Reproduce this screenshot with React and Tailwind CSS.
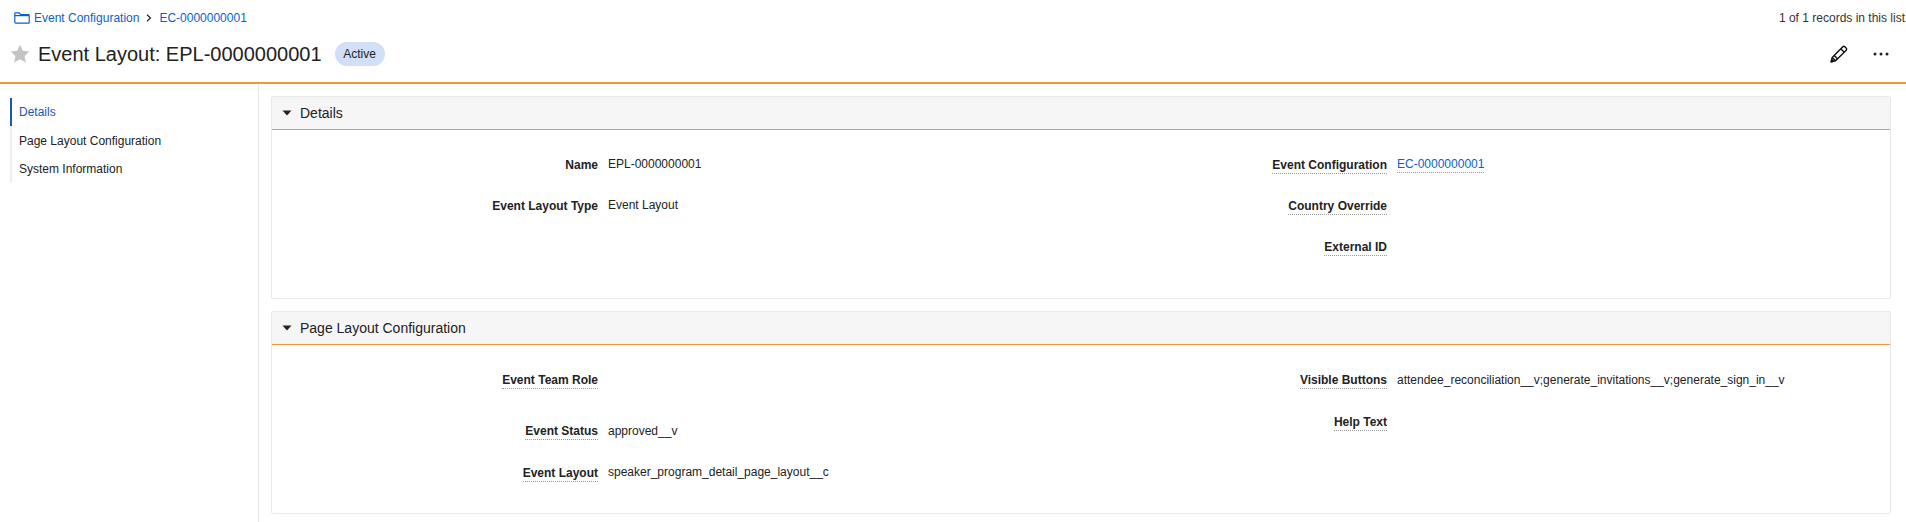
import React from "react";

const ORANGE = "border-[#f29636]";

function Field({ label, value, link, w, h = "h-[41px]", plain, nudge }) {
  return (
    <div className={`flex items-start ${h}`}>
      <div className={`${w} shrink-0 flex justify-end pr-[10px]`}>
        <span className={`font-bold leading-[15px] text-[#222] border-b ${plain ? "border-transparent" : "border-dotted border-[#999]"} ${nudge ? "mt-[1px]" : ""}`}>{label}</span>
      </div>
      {value ? (
        <span className={`leading-[14px] ${link ? "text-[#0a5fc9] border-b border-dotted border-[#999] pb-[1px]" : "text-[#222]"}`}>{value}</span>
      ) : null}
    </div>
  );
}

function Section({ title, children, bodyH }) {
  return (
    <section className="border border-[#e9e9e9] rounded-[2px] bg-white">
      <div className={`h-[33px] bg-[#f6f6f6] border-b ${ORANGE} flex items-center pl-[9px]`}>
        <svg width="10" height="6" viewBox="0 0 10 6" className="mr-[7px] ml-[1px]">
          <path d="M0.5 0.5h9L5 5.5z" fill="#222" />
        </svg>
        <h2 className="text-[14px] text-[#222] ml-[1px]">{title}</h2>
      </div>
      <div className={`grid grid-cols-2 ${bodyH}`}>{children}</div>
    </section>
  );
}

const L = "w-[336px]";
const R = "w-[316px]";

export default function App() {
  return (
    <div className="w-[1906px] h-[522px] overflow-hidden bg-white text-[12px] text-[#222] font-['Liberation_Sans',Arial,sans-serif]">
      <header className={`h-[84px] border-b-2 ${ORANGE} relative`}>
        <div className="h-[35px] pl-[14px] pr-[1px] flex items-center justify-between">
          <nav className="flex items-center text-[#0a5fc9]">
            <svg width="16" height="12" viewBox="0 0 16 12" fill="none" stroke="#0a5fc9" strokeWidth="1.2" className="mr-[4px]">
              <path d="M0.8 10V1.6c0-.5.3-.8.8-.8h3.6l1.4 1.7h7.8c.5 0 .8.3.8.8V10.400c0 .5-.3.8-.8.8H1.600c-.5 0-.8-.5-.8-1.200z" />
              <path d="M1 3.600h14" />
            </svg>
            <span>Event Configuration</span>
            <svg width="6" height="8" viewBox="0 0 6 8" fill="none" stroke="#222" strokeWidth="1.2" className="mx-[7px]">
              <path d="M1 .7 4.5 4 1 7.3" />
            </svg>
            <span>EC-0000000001</span>
          </nav>
          <span className="text-[#333]">1 of 1 records in this list</span>
        </div>
        <div className="flex items-center h-[37px] pl-[10px]">
          <svg width="20" height="19" viewBox="0 0 24 23" className="mr-[8px]">
            <path d="M12 .8l3.4 7.4 8 .9-5.9 5.4 1.6 8L12 18.5l-7.100 4 1.600-8L.6 9.100l8-.9z" fill="#c4c4c4" />
          </svg>
          <h1 className="text-[20px] text-[#222] leading-[24px]">Event Layout: EPL-0000000001</h1>
          <span className="ml-[13px] h-[24px] w-[50px] rounded-full bg-[#d2e0f7] flex items-center justify-center">Active</span>
          <div className="ml-auto flex items-center pr-[17px]">
            <svg width="18" height="18" viewBox="0 0 18 18" fill="none" stroke="#111" strokeWidth="1.4" strokeLinejoin="round" className="mr-[25px]">
              <path d="M1.200 16.800l1-4.400L12.600 2c.8-.8 1.700-.8 2.400-.1l1.100 1.100c.7.7.7 1.600-.1 2.400L5.600 15.800z" />
              <path d="M10.800 3.800l3.400 3.400M4.300 10.600l3.100 3.100M2.200 12.400l3.400 3.400" />
              <path d="M1.200 16.800l2.300-.5-1.800-1.800z" fill="#111" />
            </svg>
            <svg width="16" height="4" viewBox="0 0 16 4" fill="#222">
              <circle cx="2" cy="2" r="1.500" />
              <circle cx="8" cy="2" r="1.500" />
              <circle cx="14" cy="2" r="1.500" />
            </svg>
          </div>
        </div>
      </header>

      <div className="flex h-[438px]">
        <aside className="w-[259px] shrink-0 border-r border-[#e9e9e9] pt-[14px] pl-[10px]">
          <ul className="border-l-2 border-[#eeeeee]">
            <li className="h-[28px] -ml-[2px] border-l-2 border-[#1556b8] pl-[7px] flex items-center text-[#1556b8]">Details</li>
            <li className="h-[29px] pl-[7px] flex items-center">Page Layout Configuration</li>
            <li className="h-[28px] pl-[7px] flex items-center">System Information</li>
          </ul>
        </aside>
        <main className="w-[1632px] shrink-0 pl-[12px] pt-[12px] flex flex-col gap-[12px]">
          <Section title="Details" bodyH="h-[168px] pt-[27px]">
            <div>
              <Field w={L} label="Name" value="EPL-0000000001" plain nudge />
              <Field w={L} label="Event Layout Type" value="Event Layout" plain nudge />
            </div>
            <div>
              <Field w={R} label="Event Configuration" value="EC-0000000001" link nudge />
              <Field w={R} label="Country Override" nudge />
              <Field w={R} h="h-[42px]" label="External ID" nudge />
            </div>
          </Section>
          <Section title="Page Layout Configuration" bodyH="h-[168px] pt-[28px]">
            <div>
              <Field w={L} label="Event Team Role" h="h-[51px]" />
              <Field w={L} label="Event Status" value="approved__v" />
              <Field w={L} label="Event Layout" value="speaker_program_detail_page_layout__c" nudge />
            </div>
            <div>
              <Field w={R} label="Visible Buttons" value="attendee_reconciliation__v;generate_invitations__v;generate_sign_in__v" h="h-[42px]" />
              <Field w={R} label="Help Text" />
            </div>
          </Section>
        </main>
      </div>
    </div>
  );
}
